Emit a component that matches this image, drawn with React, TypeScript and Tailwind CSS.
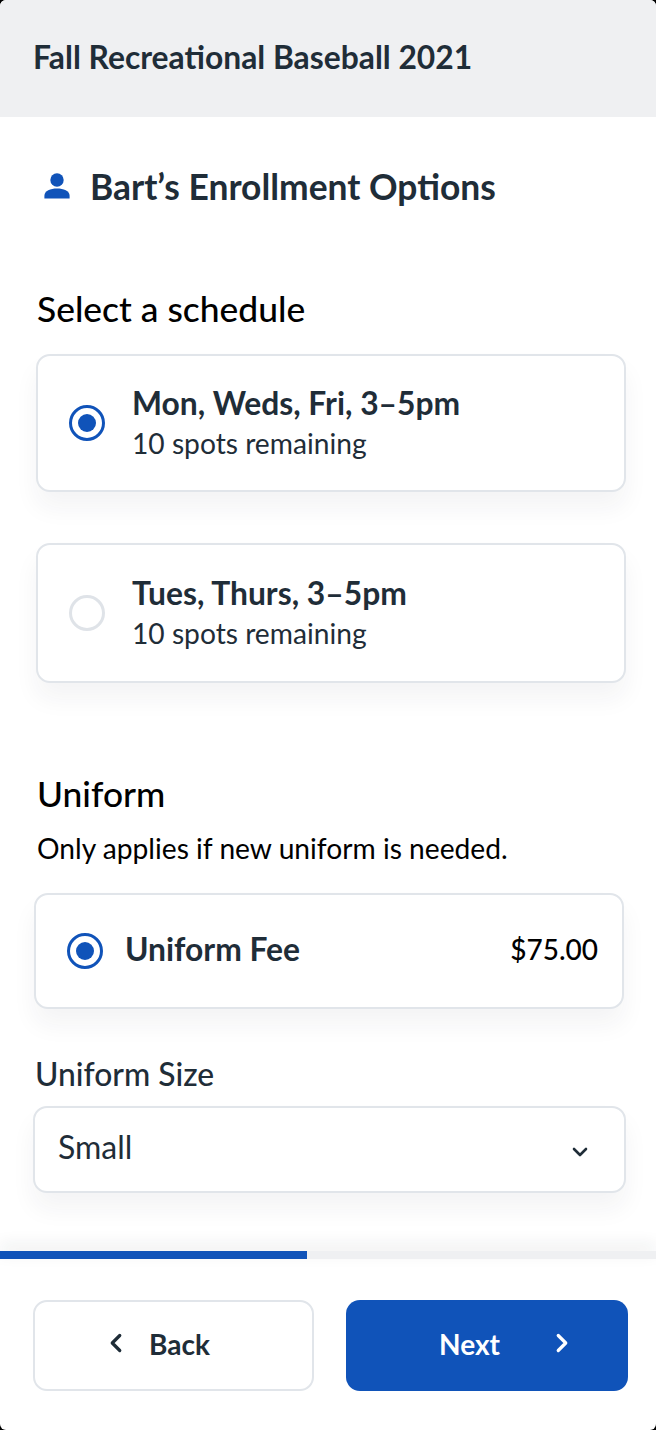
import { ChevronDown, ChevronLeft, ChevronRight } from 'lucide-react';

const cardShadow = 'shadow-[0_16px_24px_rgba(30,40,50,0.05)]';

function Radio({ checked }: { checked: boolean }) {
  if (!checked) {
    return <span className="block h-[36px] w-[36px] shrink-0 rounded-full border-[3px] border-[#dfe3e8] bg-white" />;
  }
  return (
    <span className="flex h-[36px] w-[36px] shrink-0 items-center justify-center rounded-full border-[3px] border-[#1053b9] bg-white">
      <span className="block h-[18px] w-[18px] rounded-full bg-[#1053b9]" />
    </span>
  );
}

function ScheduleCard({ title, checked, height }: { title: string; checked: boolean; height: string }) {
  return (
    <div className={`ml-[36px] mr-[30px] flex items-center rounded-[14px] border-2 border-[#e1e5ea] bg-white pl-[31px] ${height} ${cardShadow}`}>
      <Radio checked={checked} />
      <div className="ml-[27px] flex flex-col gap-[4px] pb-[3px]">
        <div className="text-[31.8px] leading-[38px] font-bold text-[#1f2d38]">{title}</div>
        <div className="text-[28.2px] leading-[34px] text-[#1f2d38]">10 spots remaining</div>
      </div>
    </div>
  );
}

export default function App() {
  return (
    <div className="h-[1430px] w-[656px] bg-black font-['Lato',sans-serif]">
      <div className="flex h-full flex-col overflow-hidden rounded-[6px] bg-white">
        <div className="flex h-[117px] items-center bg-[#eff0f2] pb-[4px] pl-[33px]">
          <h1 className="text-[31.8px] leading-[38px] font-bold text-[#1f2d38] [font-feature-settings:'liga','dlig']">Fall Recreational Baseball 2021</h1>
        </div>

        <div className="mt-[48px] flex h-[44px] items-center pl-[44px]">
          <svg width="26" height="26" viewBox="0 0 26 26" fill="#1053b9" className="mb-[2px] shrink-0">
            <circle cx="13" cy="7" r="6.7" />
            <path d="M0.4 25.5v-2.8C0.4 18 6.5 15.6 13 15.6S25.6 18 25.6 22.7v2.8z" />
          </svg>
          <h2 className="ml-[20px] text-[35.4px] leading-[44px] font-bold text-[#1f2d38] [font-feature-settings:'liga','dlig']">Bart’s Enrollment Options</h2>
        </div>

        <h3 className="mt-[78px] ml-[37px] text-[35.4px] leading-[44px] font-medium text-black">Select a schedule</h3>

        <div className="mt-[23px]">
          <ScheduleCard title="Mon, Weds, Fri, 3–5pm" checked height="h-[138px]" />
        </div>
        <div className="mt-[51px]">
          <ScheduleCard title="Tues, Thurs, 3–5pm" checked={false} height="h-[140px]" />
        </div>

        <h3 className="mt-[89px] ml-[37px] text-[35.4px] leading-[44px] font-medium text-black">Uniform</h3>
        <p className="mt-[15px] ml-[37px] text-[28.2px] leading-[34px] text-black">Only applies if new uniform is needed.</p>

        <div className={`mt-[28px] ml-[34px] mr-[32px] flex h-[116px] items-center justify-between rounded-[14px] border-2 border-[#e1e5ea] bg-white pr-[24px] pl-[31px] ${cardShadow}`}>
          <div className="flex items-center">
            <Radio checked />
            <span className="mb-[4px] ml-[22px] text-[31.8px] leading-[38px] font-bold text-[#1f2d38]">Uniform Fee</span>
          </div>
          <span className="mb-[4px] text-[28px] leading-[34px] font-medium text-black">$75.00</span>
        </div>

        <div className="mt-[45px] ml-[35px] text-[31.8px] leading-[40px] font-medium text-[#1f2d38]">Uniform Size</div>

        <div className={`mt-[12px] ml-[33px] mr-[30px] flex h-[87px] items-center justify-between rounded-[14px] border-2 border-[#e1e5ea] bg-white pr-[32px] pl-[23px] ${cardShadow}`}>
          <span className="mb-[6px] text-[32px] leading-[38px] text-[#1f2d38]">Small</span>
          <ChevronDown size={24} strokeWidth={2.6} className="mt-[4px] text-[#1f2d38]" />
        </div>

        <div className="mt-[58px] h-[8px] w-full bg-[#eff0f2] shadow-[0_-6px_16px_rgba(30,40,50,0.1)]">
          <div className="h-full w-[307px] bg-[#1053b9]" />
        </div>

        <div className="mt-[41px] flex gap-[32px] pr-[28px] pl-[33px]">
          <button className="flex h-[91px] w-[281px] items-center rounded-[14px] border-2 border-[#e1e5ea] bg-white pl-[66px] text-[#1f2d38]">
            <ChevronLeft size={30} strokeWidth={2.6} className="mb-[6px]" />
            <span className="mb-[4px] ml-[18px] text-[28px] leading-[36px] font-bold">Back</span>
          </button>
          <button className="relative flex h-[91px] w-[282px] items-center rounded-[14px] bg-[#1053b9] pl-[93px] text-white">
            <span className="mb-[4px] text-[28px] leading-[36px] font-bold">Next</span>
            <ChevronRight size={30} strokeWidth={2.6} className="absolute top-[28px] right-[51px]" />
          </button>
        </div>
      </div>
    </div>
  );
}
